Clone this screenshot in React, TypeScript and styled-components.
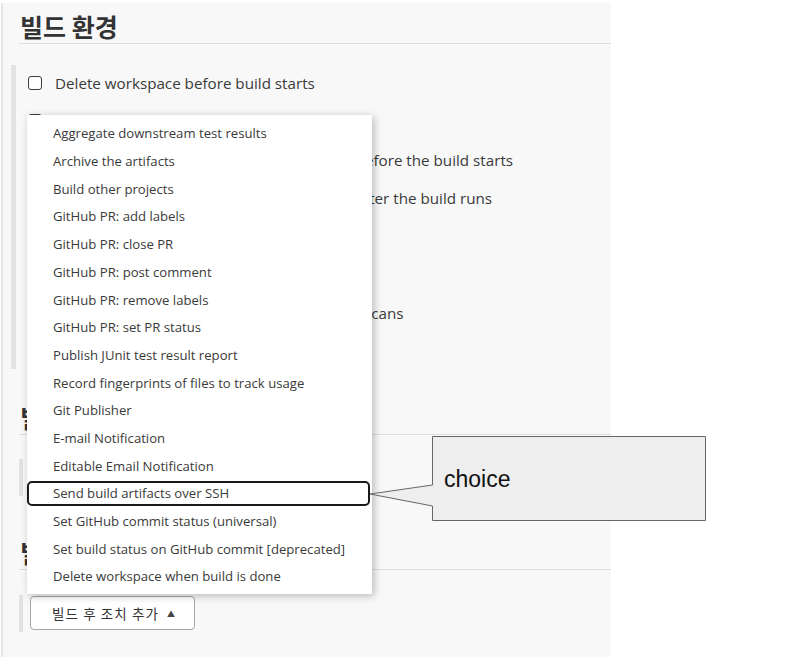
import React from "react";
import styled, { createGlobalStyle } from "styled-components";

const GlobalStyle = createGlobalStyle`
  html, body { margin: 0; padding: 0; background: #ffffff; }
  body {
    font-family: "Open Sans", "Noto Sans CJK KR", sans-serif;
    color: #333333;
  }
  * { box-sizing: border-box; }
`;

const Stage = styled.div`
  position: relative;
  width: 788px;
  height: 668px;
  padding-top: 3px;
  overflow: hidden;
  background: #ffffff;
`;

const Panel = styled.div`
  width: 610px;
  height: 654px;
  margin-left: 1px;
  background: #f8f8f8;
  border-left: 2px solid #e4e4e4;
  display: flex;
  flex-direction: column;
`;

const SectionTitle = styled.h2<{ $gap?: number }>`
  margin: ${(p) => p.$gap ?? 0}px 0 0 16px;
  padding: 7px 0 1px 1px;
  font-family: "Noto Sans CJK KR", sans-serif;
  font-weight: 700;
  font-size: 25px;
  line-height: 32px;
  color: #333333;
  border-bottom: 1px solid #dedede;
`;

const OptionGroup = styled.div`
  margin: 21px 0 0 8px;
  border-left: 5px solid #e3e3e3;
  padding: 5px 0 5px 12px;
  display: flex;
  flex-direction: column;
  gap: 12.3px;
`;

const OptionRow = styled.label`
  display: flex;
  align-items: center;
  gap: 13px;
  height: 26px;
  font-size: 15.2px;
  color: #3a3a3a;
  white-space: nowrap;
`;

const CheckBox = styled.span`
  width: 14px;
  height: 14px;
  flex: none;
  border: 1px solid #3c3c3c;
  border-radius: 3px;
  background: #ffffff;
`;

const ButtonBar = styled.div<{ $gap: number }>`
  margin: ${(p) => p.$gap}px 0 0 16px;
  border-left: 4px solid #e2e2e2;
  padding: 1px 0 2px 7px;
  display: flex;
`;

const Anchor = styled.div`
  position: relative;
`;

const ActionButton = styled.button`
  height: 34px;
  width: 165px;
  padding: 0 0 0 21px;
  display: flex;
  align-items: center;
  gap: 6px;
  background: #ffffff;
  border: 1px solid #a3a6aa;
  border-radius: 4px;
  font-family: "Noto Sans CJK KR", sans-serif;
  font-size: 13.5px;
  letter-spacing: 1.1px;
  color: #333333;
  cursor: pointer;
`;

const Caret = styled.span`
  font-size: 8px;
  color: #444444;
  margin-left: 2px;
`;

const Menu = styled.ul`
  position: absolute;
  left: -3px;
  bottom: calc(100% + 2px);
  width: 345px;
  margin: 0;
  padding: 5px 0 3px;
  list-style: none;
  background: #ffffff;
  box-shadow: 2px 2px 8px rgba(0, 0, 0, 0.26);
  z-index: 2;
`;

const MenuItem = styled.li<{ $marked?: boolean }>`
  position: relative;
  height: 27.7px;
  line-height: 27.7px;
  padding-left: 26px;
  font-size: 13.15px;
  color: #3a3a3a;
  white-space: nowrap;

  &::after {
    content: "";
    display: ${(p) => (p.$marked ? "block" : "none")};
    position: absolute;
    left: 0;
    right: 2px;
    top: 1px;
    bottom: 2px;
    border: 2px solid #1a1a1a;
    border-radius: 5px;
  }
`;

const Callout = styled.div`
  position: absolute;
  left: 368px;
  top: 435px;
  width: 340px;
  height: 87px;
  z-index: 3;
`;

const CalloutShape = styled.svg`
  position: absolute;
  inset: 0;
`;

const CalloutText = styled.div`
  position: relative;
  padding: 33px 0 0 76px;
  font-family: "Liberation Sans", Arial, sans-serif;
  font-size: 23px;
  line-height: 22px;
  color: #111111;
`;

const options = [
  "Delete workspace before build starts",
  "Use secret text(s) or file(s)",
  "Send files or execute commands over SSH before the build starts",
  "Send files or execute commands over SSH after the build runs",
  "Abort the build if it's stuck",
  "Add timestamps to the Console Output",
  "Inspect build log for published Gradle build scans",
  "With Ant",
];

const actions = [
  "Aggregate downstream test results",
  "Archive the artifacts",
  "Build other projects",
  "GitHub PR: add labels",
  "GitHub PR: close PR",
  "GitHub PR: post comment",
  "GitHub PR: remove labels",
  "GitHub PR: set PR status",
  "Publish JUnit test result report",
  "Record fingerprints of files to track usage",
  "Git Publisher",
  "E-mail Notification",
  "Editable Email Notification",
  "Send build artifacts over SSH",
  "Set GitHub commit status (universal)",
  "Set build status on GitHub commit [deprecated]",
  "Delete workspace when build is done",
];

export default function App() {
  return (
    <Stage>
      <GlobalStyle />
      <Panel>
        <SectionTitle>빌드 환경</SectionTitle>
        <OptionGroup>
          {options.map((o) => (
            <OptionRow key={o}>
              <CheckBox />
              {o}
            </OptionRow>
          ))}
        </OptionGroup>

        <SectionTitle $gap={25}>빌드</SectionTitle>
        <ButtonBar $gap={24}>
          <ActionButton>
            빌드 스텝 추가 <Caret>▼</Caret>
          </ActionButton>
        </ButtonBar>

        <SectionTitle $gap={33}>빌드 후 조치</SectionTitle>
        <ButtonBar $gap={25}>
          <Anchor>
            <Menu>
              {actions.map((a) => (
                <MenuItem key={a} $marked={a === "Send build artifacts over SSH"}>
                  {a}
                </MenuItem>
              ))}
            </Menu>
            <ActionButton>
              빌드 후 조치 추가 <Caret>▲</Caret>
            </ActionButton>
          </Anchor>
        </ButtonBar>
      </Panel>

      <Callout>
        <CalloutShape width="340" height="87" viewBox="0 0 340 87">
          <path
            d="M64.5 1.5 H337.5 V85.5 H64.5 V71 L2 59 L64.5 50 Z"
            fill="#eeeeee"
            stroke="#666666"
            strokeWidth="1"
          />
        </CalloutShape>
        <CalloutText>choice</CalloutText>
      </Callout>
    </Stage>
  );
}
